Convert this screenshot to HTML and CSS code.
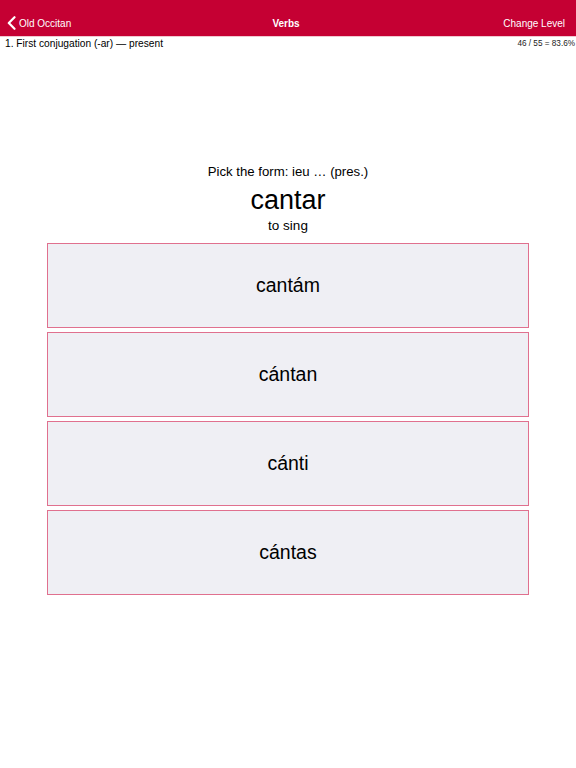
FILE: index.html
```html
<!DOCTYPE html>
<html>
<head>
<meta charset="utf-8">
<link rel="stylesheet" href="styles.css">
</head>
<body>
<header class="nav">
  <a class="nav-back">
    <svg class="chev" width="9" height="14" viewBox="0 0 9 14"><path d="M7.5 1.2 L1.8 7 L7.5 12.8" fill="none" stroke="#fff" stroke-width="2.2" stroke-linecap="round" stroke-linejoin="round"/></svg>
    <span>Old Occitan</span>
  </a>
  <div class="nav-title">Verbs</div>
  <a class="nav-right">Change Level</a>
</header>
<div class="subbar">
  <span class="lesson">1. First conjugation (-ar) — present</span>
  <span class="score">46 / 55 = 83.6%</span>
</div>
<main class="quiz">
  <p class="prompt">Pick the form: ieu … (pres.)</p>
  <p class="word">cantar</p>
  <p class="gloss">to sing</p>
  <div class="choices">
    <button class="choice">cantám</button>
    <button class="choice">cántan</button>
    <button class="choice">cánti</button>
    <button class="choice">cántas</button>
  </div>
</main>
</body>
</html>
```
FILE: styles.css
```css
* { box-sizing: border-box; }
html, body { margin: 0; padding: 0; background: #fff; }
body { width: 576px; height: 768px; font-family: "Liberation Sans", Arial, sans-serif; color: #000; }
.nav {
  height: 36px;
  background: #c50033;
  display: flex;
  align-items: flex-end;
  padding: 0 11px 6px 7px;
  color: #fff;
  font-size: 10px;
}
.nav-back { display: flex; align-items: center; gap: 3px; flex: 1; }
.nav-back span { font-size: 10px; line-height: 13px; }
.chev { display: block; }
.nav-title { font-weight: bold; flex: 1; text-align: center; line-height: 13px; }
.nav-right { flex: 1; text-align: right; line-height: 13px; }
.subbar {
  display: flex;
  justify-content: space-between;
  align-items: center;
  padding: 0 1px 0 5px;
  height: 13px;
  border-top: 1px solid #f0c8d0;
}
.lesson { font-size: 10.2px; }
.score { font-size: 8.2px; color: #222; }
.quiz { display: flex; flex-direction: column; align-items: center; padding-top: 114px; }
.prompt { margin: 0; font-size: 13.2px; line-height: 17px; }
.word { margin: 4px 0 0; font-size: 27px; line-height: 32px; }
.gloss { margin: 2px 0 0; font-size: 13.5px; line-height: 16px; }
.choices { display: flex; flex-direction: column; gap: 4px; margin-top: 9px; }
.choice {
  width: 482px;
  height: 85px;
  background: #efeff4;
  border: 1px solid #e0708e;
  font-family: inherit;
  font-size: 19.5px;
  color: #000;
  padding: 0;
}
```
